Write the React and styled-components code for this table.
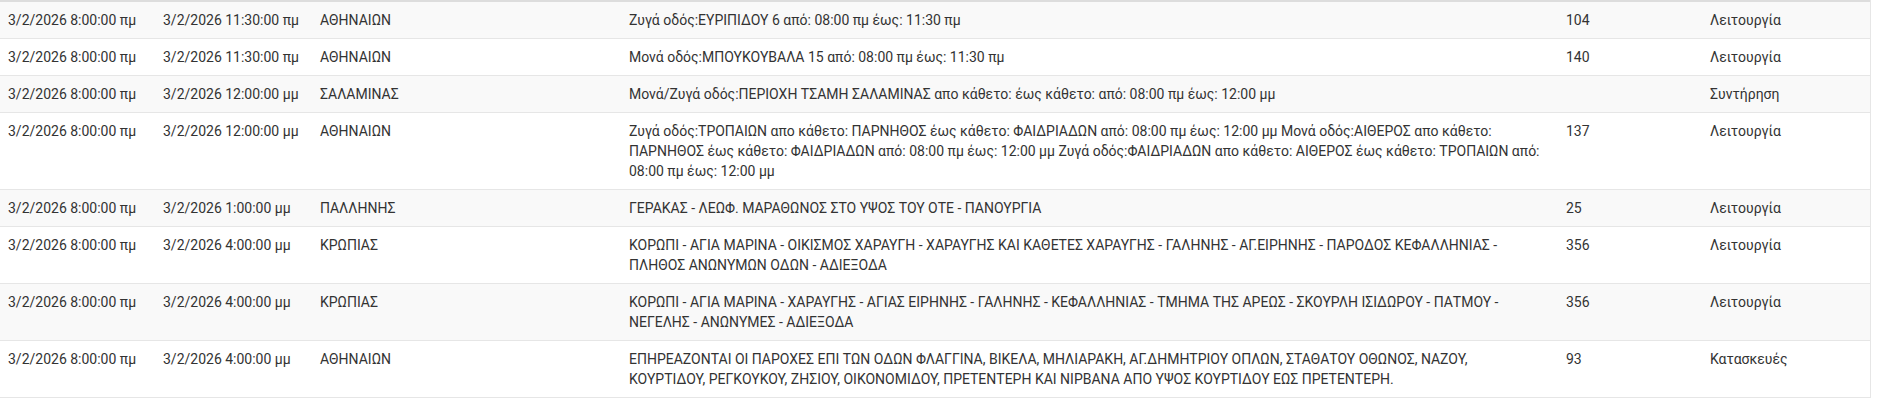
import React from 'react'
import styled, { createGlobalStyle } from 'styled-components'

const GlobalStyle = createGlobalStyle`
  body {
    margin: 0;
    background: #fff;
    font-family: Roboto, "Noto Sans", sans-serif;
    font-size: 14px;
    color: #333;
  }
`

const Wrapper = styled.div`
  width: 1870px;
  border-right: 1px solid #e6e6e6;
`

const Table = styled.table`
  width: 100%;
  table-layout: fixed;
  border-collapse: collapse;
  border-spacing: 0;
  border-top: 2px solid #ddd;
  border-bottom: 1px solid #e6e6e6;
`

const Col = styled.col`
  width: ${p => p.$w}px;
`

const Row = styled.tr`
  background: ${p => (p.$striped ? '#f9f9f9' : '#fff')};
`

const Cell = styled.td`
  padding: 8px;
  padding-right: ${p => (p.$wide ? 12 : 8)}px;
  line-height: 20px;
  vertical-align: top;
  text-align: left;
  border-top: 1px solid #e6e6e6;
`

const widths = [155, 157, 309, 937, 144, 168]

const outages = [
  ['3/2/2026 8:00:00 πμ', '3/2/2026 11:30:00 πμ', 'ΑΘΗΝΑΙΩΝ', 'Ζυγά οδός:ΕΥΡΙΠΙΔΟΥ 6 από: 08:00 πμ έως: 11:30 πμ', '104', 'Λειτουργία'],
  ['3/2/2026 8:00:00 πμ', '3/2/2026 11:30:00 πμ', 'ΑΘΗΝΑΙΩΝ', 'Μονά οδός:ΜΠΟΥΚΟΥΒΑΛΑ 15 από: 08:00 πμ έως: 11:30 πμ', '140', 'Λειτουργία'],
  ['3/2/2026 8:00:00 πμ', '3/2/2026 12:00:00 μμ', 'ΣΑΛΑΜΙΝΑΣ', 'Μονά/Ζυγά οδός:ΠΕΡΙΟΧΗ ΤΣΑΜΗ ΣΑΛΑΜΙΝΑΣ απο κάθετο: έως κάθετο: από: 08:00 πμ έως: 12:00 μμ', '', 'Συντήρηση'],
  ['3/2/2026 8:00:00 πμ', '3/2/2026 12:00:00 μμ', 'ΑΘΗΝΑΙΩΝ', 'Ζυγά οδός:ΤΡΟΠΑΙΩΝ απο κάθετο: ΠΑΡΝΗΘΟΣ έως κάθετο: ΦΑΙΔΡΙΑΔΩΝ από: 08:00 πμ έως: 12:00 μμ Μονά οδός:ΑΙΘΕΡΟΣ απο κάθετο: ΠΑΡΝΗΘΟΣ έως κάθετο: ΦΑΙΔΡΙΑΔΩΝ από: 08:00 πμ έως: 12:00 μμ Ζυγά οδός:ΦΑΙΔΡΙΑΔΩΝ απο κάθετο: ΑΙΘΕΡΟΣ έως κάθετο: ΤΡΟΠΑΙΩΝ από: 08:00 πμ έως: 12:00 μμ', '137', 'Λειτουργία'],
  ['3/2/2026 8:00:00 πμ', '3/2/2026 1:00:00 μμ', 'ΠΑΛΛΗΝΗΣ', 'ΓΕΡΑΚΑΣ - ΛΕΩΦ. ΜΑΡΑΘΩΝΟΣ ΣΤΟ ΥΨΟΣ ΤΟΥ ΟΤΕ - ΠΑΝΟΥΡΓΙΑ', '25', 'Λειτουργία'],
  ['3/2/2026 8:00:00 πμ', '3/2/2026 4:00:00 μμ', 'ΚΡΩΠΙΑΣ', 'ΚΟΡΩΠΙ - ΑΓΙΑ ΜΑΡΙΝΑ - ΟΙΚΙΣΜΟΣ ΧΑΡΑΥΓΗ - ΧΑΡΑΥΓΗΣ ΚΑΙ ΚΑΘΕΤΕΣ ΧΑΡΑΥΓΗΣ - ΓΑΛΗΝΗΣ - ΑΓ.ΕΙΡΗΝΗΣ - ΠΑΡΟΔΟΣ ΚΕΦΑΛΛΗΝΙΑΣ - ΠΛΗΘΟΣ ΑΝΩΝΥΜΩΝ ΟΔΩΝ - ΑΔΙΕΞΟΔΑ', '356', 'Λειτουργία'],
  ['3/2/2026 8:00:00 πμ', '3/2/2026 4:00:00 μμ', 'ΚΡΩΠΙΑΣ', 'ΚΟΡΩΠΙ - ΑΓΙΑ ΜΑΡΙΝΑ - ΧΑΡΑΥΓΗΣ - ΑΓΙΑΣ ΕΙΡΗΝΗΣ - ΓΑΛΗΝΗΣ - ΚΕΦΑΛΛΗΝΙΑΣ - ΤΜΗΜΑ ΤΗΣ ΑΡΕΩΣ - ΣΚΟΥΡΛΗ ΙΣΙΔΩΡΟΥ - ΠΑΤΜΟΥ - ΝΕΓΕΛΗΣ - ΑΝΩΝΥΜΕΣ - ΑΔΙΕΞΟΔΑ', '356', 'Λειτουργία'],
  ['3/2/2026 8:00:00 πμ', '3/2/2026 4:00:00 μμ', 'ΑΘΗΝΑΙΩΝ', 'ΕΠΗΡΕΑΖΟΝΤΑΙ ΟΙ ΠΑΡΟΧΕΣ ΕΠΙ ΤΩΝ ΟΔΩΝ ΦΛΑΓΓΙΝΑ, ΒΙΚΕΛΑ, ΜΗΛΙΑΡΑΚΗ, ΑΓ.ΔΗΜΗΤΡΙΟΥ ΟΠΛΩΝ, ΣΤΑΘΑΤΟΥ ΟΘΩΝΟΣ, ΝΑΖΟΥ, ΚΟΥΡΤΙΔΟΥ, ΡΕΓΚΟΥΚΟΥ, ΖΗΣΙΟΥ, ΟΙΚΟΝΟΜΙΔΟΥ, ΠΡΕΤΕΝΤΕΡΗ ΚΑΙ ΝΙΡΒΑΝΑ ΑΠΟ ΥΨΟΣ ΚΟΥΡΤΙΔΟΥ ΕΩΣ ΠΡΕΤΕΝΤΕΡΗ.', '93', 'Κατασκευές'],
]

function App() {
  return (
    <>
      <GlobalStyle />
      <Wrapper>
        <Table>
          <colgroup>
            {widths.map((w, i) => <Col key={i} $w={w} />)}
          </colgroup>
          <tbody>
            {outages.map((row, i) => (
              <Row key={i} $striped={i % 2 === 0}>
                {row.map((cell, j) => <Cell key={j} $wide={j === 3}>{cell}</Cell>)}
              </Row>
            ))}
          </tbody>
        </Table>
      </Wrapper>
    </>
  )
}

export default App
